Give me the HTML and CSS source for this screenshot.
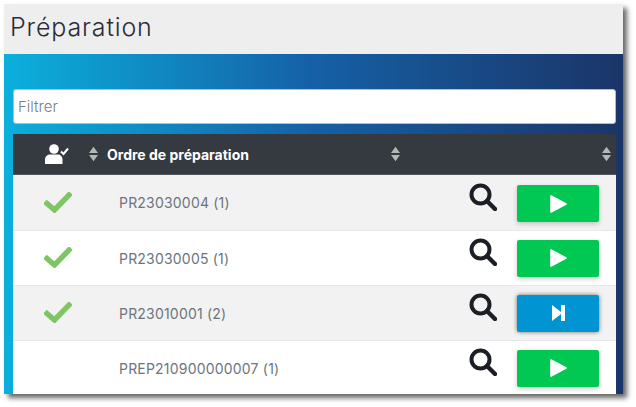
FILE: index.html
```html
<!DOCTYPE html>
<html lang="fr">

<head>
    <meta charset="UTF-8" />
    <meta name="viewport" content="width=device-width, initial-scale=1.0" />
    <title>Préparation</title>
    <link rel="stylesheet" href="styles.css">
</head>

<body>
    <svg class="defs" width="0" height="0">
        <symbol id="sort" viewBox="0 0 10 16">
            <path d="M5 0 10 7H0zM5 16 0 9H10z" fill="#b4b6b8" />
        </symbol>
        <symbol id="check" viewBox="0 0 28 21">
            <path d="M3 11.5 10.5 18 25 3" fill="none" stroke="#7fc564" stroke-width="5.4" stroke-linecap="square" />
        </symbol>
        <symbol id="loupe" viewBox="0 0 28 28">
            <circle cx="11.5" cy="11.5" r="9" fill="none" stroke="#1b1e24" stroke-width="4" />
            <path d="M18 18 26 26" fill="none" stroke="#1b1e24" stroke-width="4.4" stroke-linecap="round" />
        </symbol>
        <symbol id="play" viewBox="0 0 17 18">
            <path d="M1 1 16 9 1 17z" fill="#fff" stroke="#fff" stroke-width="1.6" stroke-linejoin="round" />
        </symbol>
        <symbol id="next" viewBox="0 0 13 16">
            <path d="M0 0 9 7V0H13V16H9V9L0 16z" fill="#fff" />
        </symbol>
    </svg>

    <div class="fenetre">
        <header class="entete">
            <h1>Préparation</h1>
        </header>

        <main class="panneau">
            <input class="filtre" type="text" placeholder="Filtrer">

            <table class="liste">
                <thead>
                    <tr>
                        <th class="col-etat">
                            <svg class="ico-user" viewBox="0 0 24 20">
                                <circle cx="9" cy="5" r="4.8" fill="#fff" />
                                <path d="M0 20V15.5C0 12.5 2.5 10.5 5 10.5H13C15.5 10.5 17.5 12.5 17.5 15.5V20z" fill="#fff" />
                                <path d="M16 7.5 18.5 10 23 4.5" fill="none" stroke="#fff" stroke-width="2" />
                            </svg>
                            <svg class="ico-sort"><use href="#sort" /></svg>
                        </th>
                        <th class="col-ordre">
                            Ordre de préparation
                            <svg class="ico-sort"><use href="#sort" /></svg>
                        </th>
                        <th class="col-actions">
                            <svg class="ico-sort"><use href="#sort" /></svg>
                        </th>
                    </tr>
                </thead>
                <tbody>
                    <tr>
                        <td class="col-etat"><svg class="ico-check"><use href="#check" /></svg></td>
                        <td class="col-ordre">PR23030004 (1)</td>
                        <td class="col-actions">
                            <div class="actions">
                                <svg class="ico-loupe"><use href="#loupe" /></svg>
                                <button class="btn btn-vert"><svg class="ico-play"><use href="#play" /></svg></button>
                            </div>
                        </td>
                    </tr>
                    <tr>
                        <td class="col-etat"><svg class="ico-check"><use href="#check" /></svg></td>
                        <td class="col-ordre">PR23030005 (1)</td>
                        <td class="col-actions">
                            <div class="actions">
                                <svg class="ico-loupe"><use href="#loupe" /></svg>
                                <button class="btn btn-vert"><svg class="ico-play"><use href="#play" /></svg></button>
                            </div>
                        </td>
                    </tr>
                    <tr>
                        <td class="col-etat"><svg class="ico-check"><use href="#check" /></svg></td>
                        <td class="col-ordre">PR23010001 (2)</td>
                        <td class="col-actions">
                            <div class="actions">
                                <svg class="ico-loupe"><use href="#loupe" /></svg>
                                <button class="btn btn-bleu"><svg class="ico-next"><use href="#next" /></svg></button>
                            </div>
                        </td>
                    </tr>
                    <tr>
                        <td class="col-etat"></td>
                        <td class="col-ordre">PREP210900000007 (1)</td>
                        <td class="col-actions">
                            <div class="actions">
                                <svg class="ico-loupe"><use href="#loupe" /></svg>
                                <button class="btn btn-vert"><svg class="ico-play"><use href="#play" /></svg></button>
                            </div>
                        </td>
                    </tr>
                </tbody>
            </table>
        </main>
    </div>
</body>

</html>
```

FILE: styles.css
```css
html {
    height: 407px;
}

body {
    height: 407px;
    margin: 0;
    background-color: #fff;
    font-family: Inter, "Noto Sans", sans-serif;
    overflow: hidden;
}

.defs {
    display: block;
}

.fenetre {
    width: 619px;
    height: 390px;
    margin: 4px 0 0 4px;
    box-shadow: 4px 4px 5px rgba(0, 0, 0, 0.6);
    overflow: hidden;
}

.entete {
    height: 50px;
    background-color: #eeeeee;
    padding-left: 6px;
    box-sizing: border-box;
}

.entete h1 {
    margin: 0;
    font-size: 25px;
    font-weight: 300;
    letter-spacing: 0.85px;
    line-height: 46px;
    color: #2b2b3a;
}

.panneau {
    height: 340px;
    padding: 35px 7px 0 9px;
    box-sizing: border-box;
    background: linear-gradient(90deg, #0bb0dc 0%, #1560a6 50%, #1b3568 100%);
}

.filtre {
    display: block;
    width: 100%;
    height: 35px;
    box-sizing: border-box;
    padding: 0 4px;
    border: 1px solid #b8bcc4;
    border-radius: 3px;
    background-color: #fff;
    font-family: inherit;
    font-size: 15px;
    font-weight: 300;
}

.filtre::placeholder {
    color: #757d85;
    opacity: 1;
}

.liste {
    width: 603px;
    margin-top: 10px;
    border-collapse: collapse;
    table-layout: fixed;
    font-size: 14px;
    letter-spacing: 0.2px;
}

.liste th {
    height: 40px;
    padding: 0;
    background-color: #343a40;
    border-bottom: 1px solid #50565e;
    color: #fff;
    font-size: 14px;
    font-weight: 700;
    letter-spacing: 0;
    text-align: left;
    position: relative;
}

.liste td {
    height: 54px;
    padding: 0;
    border-bottom: 1px solid #e6e8eb;
    color: #6c757d;
}

.liste tbody tr:first-child td {
    height: 55px;
}

.liste tbody tr:first-child .actions {
    padding-top: 2px;
}

.liste tbody tr:nth-child(odd) td {
    background-color: #f2f2f2;
}

.liste tbody tr:nth-child(even) td {
    background-color: #fff;
}

.liste tbody tr:last-child td {
    border-bottom: none;
}

.col-etat {
    width: 87px;
}

.col-ordre {
    width: 295px;
}

.liste th.col-ordre {
    padding-left: 7px;
}

.liste td.col-ordre {
    padding-left: 19px;
}

.ico-sort {
    position: absolute;
    right: 2px;
    top: 12px;
    width: 9px;
    height: 16px;
}

.liste th.col-actions .ico-sort {
    right: 5px;
}

.ico-user {
    display: block;
    width: 24px;
    height: 20px;
    margin-left: 32px;
}

.ico-check {
    display: block;
    width: 28px;
    height: 21px;
    margin: -1px 0 0 31px;
}

.actions {
    display: flex;
    align-items: flex-start;
    gap: 20px;
    padding-left: 67px;
}

.ico-loupe {
    display: block;
    width: 28px;
    height: 28px;
    margin-top: -2px;
}

.btn {
    display: flex;
    align-items: center;
    justify-content: center;
    width: 82px;
    height: 37px;
    padding: 0;
    border: none;
    border-radius: 2px;
    box-shadow: 0 2px 5px rgba(0, 0, 0, 0.2);
}

.btn-vert {
    background-color: #00c853;
}

.btn-bleu {
    background-color: #0094d2;
    box-shadow: 0 0 4px rgba(0, 0, 0, 0.55);
}

.ico-play {
    width: 17px;
    height: 18px;
}

.ico-next {
    width: 13px;
    height: 16px;
}
```
